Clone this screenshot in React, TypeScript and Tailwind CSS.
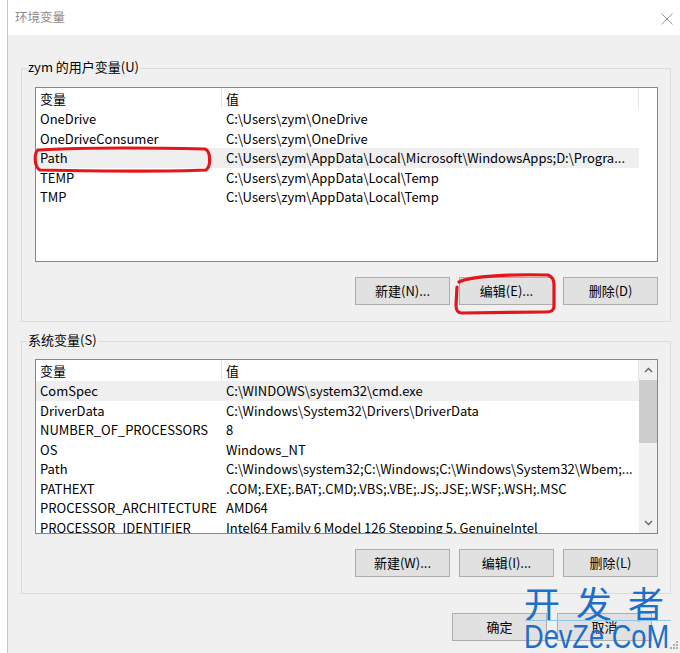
import React from "react";

const FONT = { fontFamily: '"Noto Sans CJK SC", "Noto Sans", sans-serif' };

type Row = [string, string];

const userRows: Row[] = [
  ["OneDrive", "C:\\Users\\zym\\OneDrive"],
  ["OneDriveConsumer", "C:\\Users\\zym\\OneDrive"],
  ["Path", "C:\\Users\\zym\\AppData\\Local\\Microsoft\\WindowsApps;D:\\Progra..."],
  ["TEMP", "C:\\Users\\zym\\AppData\\Local\\Temp"],
  ["TMP", "C:\\Users\\zym\\AppData\\Local\\Temp"],
];

const sysRows: Row[] = [
  ["ComSpec", "C:\\WINDOWS\\system32\\cmd.exe"],
  ["DriverData", "C:\\Windows\\System32\\Drivers\\DriverData"],
  ["NUMBER_OF_PROCESSORS", "8"],
  ["OS", "Windows_NT"],
  ["Path", "C:\\Windows\\system32;C:\\Windows;C:\\Windows\\System32\\Wbem;..."],
  ["PATHEXT", ".COM;.EXE;.BAT;.CMD;.VBS;.VBE;.JS;.JSE;.WSF;.WSH;.MSC"],
  ["PROCESSOR_ARCHITECTURE", "AMD64"],
  ["PROCESSOR_IDENTIFIER", "Intel64 Family 6 Model 126 Stepping 5, GenuineIntel"],
];

function Scrollbar() {
  return (
    <div className="w-[18px] h-full bg-[#f0f0f0] flex flex-col items-center">
      <div className="h-[20px] w-full flex items-center justify-center">
        <svg width="9" height="6" viewBox="0 0 9 6">
          <path d="M1 5 L4.5 1.5 L8 5" fill="none" stroke="#606060" strokeWidth="1.3" />
        </svg>
      </div>
      <div className="h-[63px] w-full bg-[#cdcdcd]" />
      <div className="flex-1" />
      <div className="h-[20px] w-full flex items-center justify-center">
        <svg width="9" height="6" viewBox="0 0 9 6">
          <path d="M1 1 L4.5 4.5 L8 1" fill="none" stroke="#606060" strokeWidth="1.3" />
        </svg>
      </div>
    </div>
  );
}

function EnvList({ rows, selected, scroll }: { rows: Row[]; selected: number; scroll?: boolean }) {
  return (
    <div className="h-[175px] border border-[#828790] bg-white flex overflow-hidden">
      <div className="w-[603px] flex flex-col shrink-0">
        <div className="h-[21px] flex shrink-0 text-[13px] text-black">
          <div className="w-[186px] pl-[4px] border-r border-[#e5e5e5] flex items-center">变量</div>
          <div className="flex-1 pl-[4px] border-r border-[#e5e5e5] flex items-center">值</div>
        </div>
        {rows.map((r, i) => (
          <div
            key={i}
            className={
              "h-[19.5px] shrink-0 flex items-center text-[13px] text-black whitespace-nowrap " +
              (i === selected ? "bg-[#efefef]" : "")
            }
          >
            <div className="w-[186px] pl-[4px] overflow-hidden">{r[0]}</div>
            <div className="flex-1 pl-[4px] overflow-hidden">{r[1]}</div>
          </div>
        ))}
      </div>
      {scroll ? <Scrollbar /> : <div className="flex-1" />}
    </div>
  );
}

function Btn({ label }: { label: string }) {
  return (
    <div className="w-[95px] h-[28px] bg-[#e1e1e1] border border-[#adadad] flex items-center justify-center text-[13px] text-black">
      {label}
    </div>
  );
}

function Group({
  title,
  rows,
  selected,
  scroll,
  buttons,
  pt,
}: {
  title: string;
  rows: Row[];
  selected: number;
  scroll?: boolean;
  buttons: string[];
  pt: string;
}) {
  return (
    <div className={"relative border border-[#dcdcdc] pl-[13px] pr-[12px] pb-[16px] " + pt}>
      <div className="absolute left-[5px] top-[-11px] px-[1px] bg-[#f0f0f0] text-[13px] text-black leading-[18px]">
        {title}
      </div>
      <EnvList rows={rows} selected={selected} scroll={scroll} />
      <div className="mt-[15px] flex justify-end gap-[9px]">
        {buttons.map((b) => (
          <Btn key={b} label={b} />
        ))}
      </div>
    </div>
  );
}

export default function App() {
  return (
    <div className="relative w-[680px] h-[653px] bg-white flex overflow-hidden" style={FONT}>
      <div className="w-[7px] shrink-0 bg-white" />
      <div className="flex-1 flex flex-col border-l border-[#c4c4c4]">
        <div className="h-[35px] bg-white flex items-center justify-between pl-[7px] pr-[7px]">
          <span className="text-[12.5px] text-[#8c8c8c]">环境变量</span>
          <svg width="12" height="12" viewBox="0 0 12 12" className="mt-[2px]">
            <path d="M0.5 0.5 L11.5 11.5 M11.5 0.5 L0.5 11.5" stroke="#9a9a9a" strokeWidth="1" />
          </svg>
        </div>
        <div className="flex-1 bg-[#f0f0f0] pl-[13px] pr-[9px] pt-[33px] flex flex-col">
          <Group
            title="zym 的用户变量(U)"
            rows={userRows}
            selected={2}
            buttons={["新建(N)...", "编辑(E)...", "删除(D)"]}
            pt="pt-[18px]"
          />
          <div className="h-[19px]" />
          <Group
            title="系统变量(S)"
            rows={sysRows}
            selected={0}
            scroll
            buttons={["新建(W)...", "编辑(I)...", "删除(L)"]}
            pt="pt-[17px]"
          />
          <div className="mt-[19px] flex gap-[10px] pl-[431px]">
            <Btn label="确定" />
            <Btn label="取消" />
          </div>
        </div>
      </div>

      {/* red annotations */}
      <svg className="absolute left-0 top-0 pointer-events-none" width="680" height="653" viewBox="0 0 680 653">
        <path
          d="M40 150 C 90 147, 160 148, 205 149 C 211 151, 211 167, 206 170 C 160 172, 90 171, 40 170 C 34 167, 34 153, 38 150 L 60 149"
          fill="none"
          stroke="#e4161c"
          strokeWidth="3.2"
          strokeLinecap="round"
        />
        <path
          d="M459 282 C 470 276, 515 274, 548 275 C 553 277, 554 280, 554 285 L 554 306 C 554 311, 551 312, 546 312 L 462 313 C 457 313, 456 310, 456 305 L 457 287"
          fill="none"
          stroke="#e4161c"
          strokeWidth="3.2"
          strokeLinecap="round"
        />
        <g fill="#b0b0b0">
          <rect x="676" y="641" width="2" height="2" />
          <rect x="673" y="644" width="2" height="2" />
          <rect x="676" y="644" width="2" height="2" />
          <rect x="670" y="647" width="2" height="2" />
          <rect x="673" y="647" width="2" height="2" />
          <rect x="676" y="647" width="2" height="2" />
        </g>
      </svg>

      {/* watermark */}
      <div className="absolute left-[524px] top-[584px] w-[150px] flex flex-col pointer-events-none text-[#1d6fc9]">
        <div
          className="text-[36px] leading-[36px] tracking-[16px] whitespace-nowrap"
          style={{ fontFamily: '"Noto Sans CJK SC", sans-serif' }}
        >
          开发者
        </div>
        <div className="h-[1px] bg-[#8cc4ee] w-[146px] ml-[1px]" />
        <div
          className="text-[34px] leading-[30px] whitespace-nowrap origin-left scale-x-[0.8]"
          style={{ fontFamily: '"Liberation Sans", sans-serif' }}
        >
          DevZe.CoM
        </div>
      </div>
    </div>
  );
}
